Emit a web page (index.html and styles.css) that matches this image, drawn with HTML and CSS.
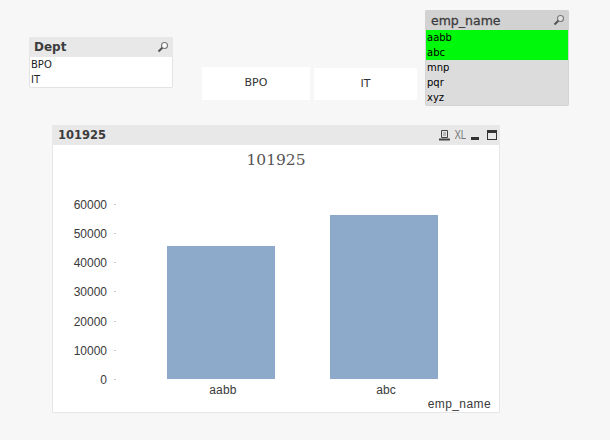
FILE: index.html
```html
<!DOCTYPE html>
<html lang="en">
<head>
  <meta charset="UTF-8">
  <meta name="viewport" content="width=device-width, initial-scale=1.0">
  <title>QlikView sheet</title>
  <link rel="stylesheet" href="styles.css">
</head>
<body>
  <div class="sheet">
    <!-- objects on the sheet are placed freely, like windows -->
    <div class="listbox dept">
      <div class="caption">
        <span class="caption-text">Dept</span>
        <svg class="search" width="12" height="12" viewBox="0 0 12 12"><circle cx="7.5" cy="4.500" r="3" fill="#fff" stroke="#777" stroke-width="1.1"/><path d="M5.300 6.700 1.500 10.500" stroke="#555" stroke-width="2"/></svg>
      </div>
      <div class="row">BPO</div>
      <div class="row">IT</div>
    </div>

    <div class="button-box btn-bpo">BPO</div>
    <div class="button-box btn-it">IT</div>

    <div class="listbox emp">
      <div class="caption">
        <span class="caption-text">emp_name</span>
        <svg class="search" width="12" height="12" viewBox="0 0 12 12"><circle cx="7.5" cy="4.500" r="3" fill="#e4e4e4" stroke="#777" stroke-width="1.1"/><path d="M5.300 6.700 1.500 10.500" stroke="#555" stroke-width="2"/></svg>
      </div>
      <div class="row selected">aabb</div>
      <div class="row selected">abc</div>
      <div class="row">mnp</div>
      <div class="row">pqr</div>
      <div class="row">xyz</div>
    </div>

    <div class="chart">
      <div class="caption chart-caption">
        <span class="caption-text">101925</span>
        <div class="tools">
          <svg class="print" width="11" height="11" viewBox="0 0 11 11"><path d="M2.500 .5h6v7h-6z" fill="none" stroke="#444"/><path d="M4 3h3M4 5h3" stroke="#888"/><path d="M0 9.500h11" stroke="#444" stroke-width="2"/></svg>
          <span class="xl">XL</span>
          <span class="minimize"></span>
          <span class="maximize"></span>
        </div>
      </div>
      <div class="chart-body">
        <div class="chart-title">101925</div>
        <div class="tick t60"><span>60000</span></div>
        <div class="tick t50"><span>50000</span></div>
        <div class="tick t40"><span>40000</span></div>
        <div class="tick t30"><span>30000</span></div>
        <div class="tick t20"><span>20000</span></div>
        <div class="tick t10"><span>10000</span></div>
        <div class="tick t0"><span>0</span></div>
        <div class="bar bar-aabb"></div>
        <div class="bar bar-abc"></div>
        <div class="bar-label label-aabb">aabb</div>
        <div class="bar-label label-abc">abc</div>
        <div class="axis-name">emp_name</div>
      </div>
    </div>
  </div>
</body>
</html>
```

FILE: styles.css
```css
html, body {
  margin: 0;
  padding: 0;
}

body {
  background: #f7f7f7;
  font-family: "Liberation Sans", Arial, sans-serif;
  color: #333;
}

.sheet {
  position: relative;
  width: 610px;
  height: 440px;
  overflow: hidden;
}

/* list boxes */
.listbox {
  position: absolute;
  width: 142px;
  border: 1px solid #e3e3e3;
  border-top: 0;
  border-radius: 2px;
  background: #fff;
}

.dept {
  left: 29px;
  top: 37px;
  height: 50px;
}

.emp {
  left: 425px;
  top: 10px;
  height: 95px;
  background: #dcdcdc;
  border-color: #d4d4d4;
}

.caption {
  display: flex;
  align-items: center;
  justify-content: space-between;
  height: 20px;
  margin: 0 -1px;
  padding: 0 4px 0 5px;
  background: #e8e8e8;
  border-radius: 2px 2px 0 0;
}

.emp .caption {
  padding-left: 6px;
  background: #d2d2d2;
}

.caption-text {
  font-family: "DejaVu Sans", sans-serif;
  font-size: 12px;
  font-weight: bold;
  color: #3c3c3c;
}

.emp .caption-text {
  font-weight: normal;
  -webkit-text-stroke: 0.3px #3c3c3c;
  font-size: 12.5px;
}

.search {
  display: block;
}

.row {
  height: 15px;
  padding-left: 1px;
  font-family: "DejaVu Sans", sans-serif;
  font-size: 10px;
  line-height: 15px;
  color: #222;
}

.emp .row {
  color: #000;
}

.emp .row.selected {
  background: #00f80b;
}

/* buttons */
.button-box {
  position: absolute;
  display: flex;
  align-items: center;
  justify-content: center;
  padding-bottom: 2px;
  box-sizing: border-box;
  background: #fff;
  font-family: "DejaVu Sans", sans-serif;
  font-size: 11px;
  color: #333;
}

.btn-bpo {
  left: 202px;
  top: 67px;
  width: 108px;
  height: 33px;
}

.btn-it {
  left: 314px;
  top: 68px;
  width: 103px;
  height: 32px;
}

/* chart */
.chart {
  position: absolute;
  left: 52px;
  top: 125px;
  width: 448px;
  height: 288px;
  display: flex;
  flex-direction: column;
  box-sizing: border-box;
  border: 1px solid #e6e6e6;
  border-top: 0;
  background: #fff;
}

.chart-caption {
  flex: none;
  padding: 0 3px 0 6px;
}

.chart-caption .caption-text {
  font-size: 11.5px;
}

.tools {
  display: flex;
  align-items: center;
}

.print {
  margin-right: 3px;
}

.xl {
  font-size: 12px;
  color: #777;
  transform: scaleX(0.8);
}

.minimize {
  width: 8px;
  height: 3px;
  margin: 6px 8px 0 3px;
  background: #333;
}

.maximize {
  box-sizing: border-box;
  width: 10px;
  height: 10px;
  border: 1px solid #333;
  border-top-width: 3px;
}

.chart-body {
  position: relative;
  flex: 1;
}

.chart-title {
  padding-top: 5px;
  text-align: center;
  font-family: "DejaVu Serif", serif;
  font-size: 15.5px;
  line-height: 20px;
  color: #555;
}

.tick {
  position: absolute;
  left: 0;
  width: 63px;
  height: 1px;
  background: linear-gradient(to right, transparent 61px, #ccc 61px);
}

.tick span {
  position: absolute;
  right: 9px;
  top: -6px;
  font-size: 12px;
  line-height: 14px;
  color: #3a3a3a;
}

.t60 { top: 59px; }
.t50 { top: 88px; }
.t40 { top: 117px; }
.t30 { top: 146px; }
.t20 { top: 176px; }
.t10 { top: 205px; }
.t0 { top: 234px; }

.bar {
  position: absolute;
  bottom: 33px;
  width: 108px;
  background: #8eaaca;
}

.bar-aabb {
  left: 114px;
  height: 133px;
}

.bar-abc {
  left: 277px;
  height: 164px;
}

.bar-label {
  position: absolute;
  top: 238px;
  width: 108px;
  text-align: center;
  font-size: 12px;
  line-height: 14px;
  color: #3a3a3a;
}

.label-aabb {
  left: 116px;
  letter-spacing: 0.2px;
}

.label-abc {
  left: 279px;
}

.axis-name {
  position: absolute;
  right: 8px;
  bottom: 1px;
  font-size: 12px;
  line-height: 14px;
  letter-spacing: 0.4px;
  color: #3a3a3a;
}
```
